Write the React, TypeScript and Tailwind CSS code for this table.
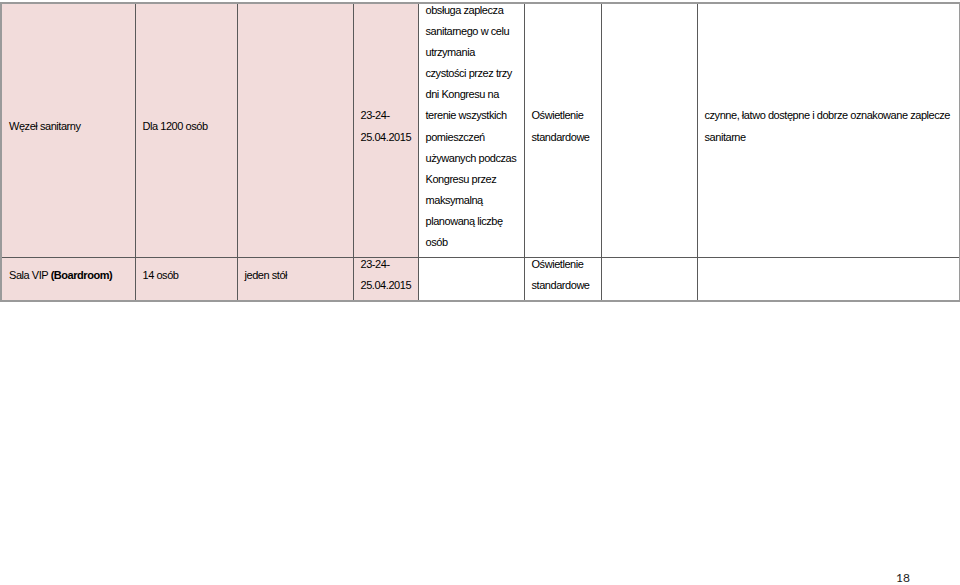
const cell =
  "align-middle px-[7px] py-0 text-left text-[11px] tracking-[-0.45px] leading-[21.1px] whitespace-nowrap text-black border border-[#5a5a5a]";
const pink = "bg-[#f2dcdb]";

const mainNotes = [
  "obsługa zaplecza",
  "sanitarnego w celu",
  "utrzymania",
  "czystości przez trzy",
  "dni Kongresu na",
  "terenie wszystkich",
  "pomieszczeń",
  "używanych podczas",
  "Kongresu przez",
  "maksymalną",
  "planowaną liczbę",
  "osób",
];

// text in the source sits a few px above the line box centre
function Txt({ children }: { children: React.ReactNode }) {
  return <div className="-mt-[4px] mb-[4px]">{children}</div>;
}

function Lines({ lines }: { lines: string[] }) {
  return (
    <Txt>
      {lines.map((l) => (
        <div key={l}>{l}</div>
      ))}
    </Txt>
  );
}

export default function App() {
  return (
    <div
      className="flex h-[585px] w-[960px] flex-col overflow-hidden bg-white"
      style={{ fontFamily: '"Liberation Sans Narrow", "Liberation Sans", Arial, sans-serif' }}
    >
      <div className="pt-[2px]">
        <table className="w-[959px] table-fixed border-collapse border-2 border-[#9a9a9a]">
          <colgroup>
            <col className="w-[134px]" />
            <col className="w-[102px]" />
            <col className="w-[116px]" />
            <col className="w-[65px]" />
            <col className="w-[106px]" />
            <col className="w-[77px]" />
            <col className="w-[96px]" />
            <col className="w-[263px]" />
          </colgroup>
          <tbody>
            <tr>
              <td className={`${cell} ${pink}`}>
                <Txt>Węzeł sanitarny</Txt>
              </td>
              <td className={`${cell} ${pink}`}>
                <Txt>Dla 1200 osób</Txt>
              </td>
              <td className={`${cell} ${pink}`}></td>
              <td className={`${cell} ${pink} px-[6px]`}>
                <Lines lines={["23-24-", "25.04.2015"]} />
              </td>
              <td className={cell}>
                <Lines lines={mainNotes} />
              </td>
              <td className={`${cell} px-[5px]`}>
                <Lines lines={["Oświetlenie", "standardowe"]} />
              </td>
              <td className={cell}></td>
              <td className={cell}>
                <Lines lines={["czynne, łatwo dostępne i dobrze oznakowane zaplecze", "sanitarne"]} />
              </td>
            </tr>
            <tr>
              <td className={`${cell} ${pink}`}>
                <Txt>
                  Sala VIP <b className="font-bold">(Boardroom)</b>
                </Txt>
              </td>
              <td className={`${cell} ${pink}`}>
                <Txt>14 osób</Txt>
              </td>
              <td className={`${cell} ${pink}`}>
                <Txt>jeden stół</Txt>
              </td>
              <td className={`${cell} ${pink} px-[6px]`}>
                <Lines lines={["23-24-", "25.04.2015"]} />
              </td>
              <td className={cell}></td>
              <td className={`${cell} px-[5px]`}>
                <Lines lines={["Oświetlenie", "standardowe"]} />
              </td>
              <td className={cell}></td>
              <td className={cell}></td>
            </tr>
          </tbody>
        </table>
      </div>
      <div className="flex-1" />
      <div
        className="flex justify-end pr-[50px] text-[12px] leading-[14px] text-[#222]"
        style={{ fontFamily: "Lato, sans-serif" }}
      >
        18
      </div>
    </div>
  );
}
